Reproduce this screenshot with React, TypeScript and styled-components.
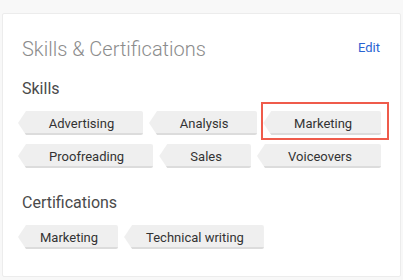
import React from 'react'
import styled, { createGlobalStyle } from 'styled-components'

const GlobalStyle = createGlobalStyle`
  html, body {
    margin: 0;
    padding: 0;
    background: #f8f8f8;
    font-family: Roboto, 'Liberation Sans', sans-serif;
  }
`

const Page = styled.div`
  padding: 13px 2px 3px 2px;
`

const Card = styled.div`
  width: 399px;
  height: 264px;
  box-sizing: border-box;
  background: #fff;
  border: 1px solid #ececec;
  border-radius: 2px;
  padding: 23px 19px 0 19px;
`

const Header = styled.div`
  display: flex;
  align-items: center;
  justify-content: space-between;
  height: 24px;
`

const Title = styled.div`
  font-size: 20px;
  font-weight: 300;
  color: #8c8c8c;
  line-height: 24px;
`

const EditLink = styled.a`
  font-size: 13px;
  color: #2a63d2;
  text-decoration: none;
  margin-top: -3px;
  margin-right: 1px;
  cursor: pointer;
`

const SectionLabel = styled.div<{ $top: number }>`
  margin-top: ${p => p.$top}px;
  font-size: 16px;
  line-height: 20px;
  color: #4a4a4a;
`

const TagList = styled.div<{ $grow?: boolean }>`
  display: flex;
  flex-wrap: wrap;
  gap: 9px 6px;
  margin: 12px 0 0 -4px;
  & > * {
    flex: ${p => (p.$grow ? '1 1 auto' : '0 0 auto')};
  }
`

const TagWrap = styled.div`
  position: relative;
  height: 24px;
`

const TagShape = styled.div`
  height: 24px;
  box-sizing: border-box;
  padding: 0 20px 0 22px;
  display: flex;
  align-items: center;
  justify-content: center;
  font-size: 13px;
  color: #333;
  white-space: nowrap;
  background: linear-gradient(to bottom, #efefef 0, #efefef 22px, #dcdcdc 22px);
  clip-path: polygon(8px 0, 100% 0, 100% 100%, 8px 100%, 0 50%);
  border-radius: 0 2px 2px 0;
`

const Highlight = styled.div`
  position: absolute;
  top: -9px;
  left: -2px;
  right: -8px;
  bottom: -5px;
  border: 2px solid #ef5b4b;
  pointer-events: none;
`

interface ITagProps {
  label: string
  highlighted?: boolean
}

const Tag = ({ label, highlighted }: ITagProps) => (
  <TagWrap>
    <TagShape>{label}</TagShape>
    {highlighted && <Highlight />}
  </TagWrap>
)

const skills = ['Advertising', 'Analysis', 'Marketing', 'Proofreading', 'Sales', 'Voiceovers']
const certifications = ['Marketing', 'Technical writing']

export default function App() {
  return (
    <Page>
      <GlobalStyle />
      <Card>
        <Header>
          <Title>Skills &amp; Certifications</Title>
          <EditLink>Edit</EditLink>
        </Header>
        <SectionLabel $top={18}>Skills</SectionLabel>
        <TagList $grow>
          {skills.map(s => (
            <Tag key={s} label={s} highlighted={s === 'Marketing'} />
          ))}
        </TagList>
        <SectionLabel $top={25}>Certifications</SectionLabel>
        <TagList>
          {certifications.map(c => (
            <Tag key={c} label={c} />
          ))}
        </TagList>
      </Card>
    </Page>
  )
}
